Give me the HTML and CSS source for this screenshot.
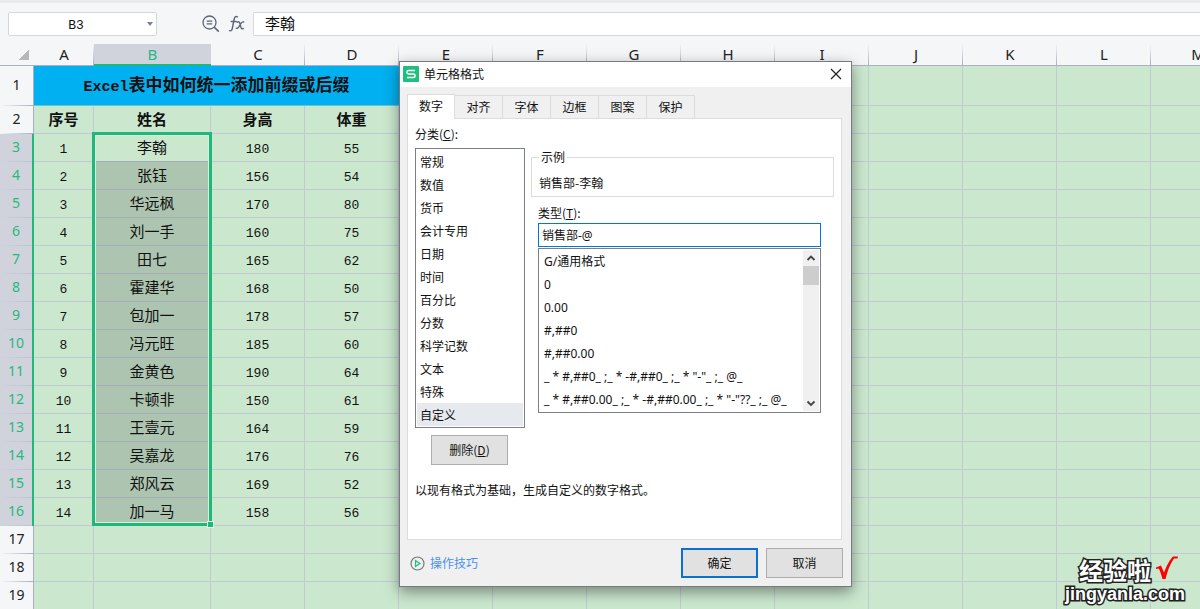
FILE: index.html
```html
<!DOCTYPE html>
<html lang="zh-CN">
<head>
<meta charset="utf-8">
<title>单元格格式</title>
<link rel="stylesheet" href="styles.css">
</head>
<body>
<main class="app">
<header class="formula-bar">
  <div class="name-box">
    <input class="name-input" type="text" value="B3" aria-label="名称框">
    <button class="name-arrow" type="button" aria-label="展开名称"></button>
  </div>
  <div class="formula-tools">
    <button class="tool" type="button" aria-label="浏览公式结果">
      <svg width="18" height="18" viewBox="0 0 18 18" fill="none" stroke="#5c6478" stroke-width="1.3"><circle cx="7.5" cy="7.5" r="6.5"/><path d="M4.7 6.2h5.6M4.7 8.8h5.6"/><path d="M12.2 12.2l4.6 4.4" stroke-width="1.6"/></svg>
    </button>
    <button class="tool" type="button" aria-label="插入函数">
      <svg width="18" height="18" viewBox="0 0 18 18" fill="none" stroke="#5c6478" stroke-width="1.4" stroke-linecap="round"><path d="M9.5 1.8C7.600.9 6.600 2 6.200 4L4.300 13.500C3.900 15.500 3 16.200 1.600 15.700M3.200 6.500h5"/><path d="M9.300 7.300c1.300-1 2.100-.3 2.500 1l1.200 4.300c.4 1.300 1.200 1.700 2.300.8M15.700 7c-1-.5-1.700 0-2.600 1.100l-2.500 4c-.7 1-1.300 1.500-2.300 1.200"/></svg>
    </button>
  </div>
  <input class="formula-input" type="text" value="李翰" aria-label="编辑栏">
</header>

<section class="sheet">
<table class="grid">
<colgroup><col class="c-head"><col class="c-a"><col class="c-b"><col span="11" class="c-std"></colgroup>
<thead>
<tr><th class="corner"></th><th>A</th><th class="on">B</th><th>C</th><th>D</th><th>E</th><th>F</th><th>G</th><th>H</th><th>I</th><th>J</th><th>K</th><th>L</th><th>M</th></tr>
</thead>
<tbody>
<tr class="title-row"><th>1</th><td class="title" colspan="4"><span class="latin">Excel</span>表中如何统一添加前缀或后缀</td><td></td><td></td><td></td><td></td><td></td><td></td><td></td><td></td><td></td></tr>
<tr class="label-row"><th>2</th><td>序号</td><td>姓名</td><td>身高</td><td>体重</td><td></td><td></td><td></td><td></td><td></td><td></td><td></td><td></td><td></td></tr>
<tr class="picked"><th>3</th><td>1</td><td class="active">李翰<span class="selection"><span class="handle"></span></span></td><td>180</td><td>55</td><td></td><td></td><td></td><td></td><td></td><td></td><td></td><td></td><td></td></tr>
<tr class="picked"><th>4</th><td>2</td><td>张钰</td><td>156</td><td>54</td><td></td><td></td><td></td><td></td><td></td><td></td><td></td><td></td><td></td></tr>
<tr class="picked"><th>5</th><td>3</td><td>华远枫</td><td>170</td><td>80</td><td></td><td></td><td></td><td></td><td></td><td></td><td></td><td></td><td></td></tr>
<tr class="picked"><th>6</th><td>4</td><td>刘一手</td><td>160</td><td>75</td><td></td><td></td><td></td><td></td><td></td><td></td><td></td><td></td><td></td></tr>
<tr class="picked"><th>7</th><td>5</td><td>田七</td><td>165</td><td>62</td><td></td><td></td><td></td><td></td><td></td><td></td><td></td><td></td><td></td></tr>
<tr class="picked"><th>8</th><td>6</td><td>霍建华</td><td>168</td><td>50</td><td></td><td></td><td></td><td></td><td></td><td></td><td></td><td></td><td></td></tr>
<tr class="picked"><th>9</th><td>7</td><td>包加一</td><td>178</td><td>57</td><td></td><td></td><td></td><td></td><td></td><td></td><td></td><td></td><td></td></tr>
<tr class="picked"><th>10</th><td>8</td><td>冯元旺</td><td>185</td><td>60</td><td></td><td></td><td></td><td></td><td></td><td></td><td></td><td></td><td></td></tr>
<tr class="picked"><th>11</th><td>9</td><td>金黄色</td><td>190</td><td>64</td><td></td><td></td><td></td><td></td><td></td><td></td><td></td><td></td><td></td></tr>
<tr class="picked"><th>12</th><td>10</td><td>卡顿非</td><td>150</td><td>61</td><td></td><td></td><td></td><td></td><td></td><td></td><td></td><td></td><td></td></tr>
<tr class="picked"><th>13</th><td>11</td><td>王壹元</td><td>164</td><td>59</td><td></td><td></td><td></td><td></td><td></td><td></td><td></td><td></td><td></td></tr>
<tr class="picked"><th>14</th><td>12</td><td>吴嘉龙</td><td>176</td><td>76</td><td></td><td></td><td></td><td></td><td></td><td></td><td></td><td></td><td></td></tr>
<tr class="picked"><th>15</th><td>13</td><td>郑风云</td><td>169</td><td>52</td><td></td><td></td><td></td><td></td><td></td><td></td><td></td><td></td><td></td></tr>
<tr class="picked"><th>16</th><td>14</td><td>加一马</td><td>158</td><td>56</td><td></td><td></td><td></td><td></td><td></td><td></td><td></td><td></td><td></td></tr>
<tr><th>17</th><td></td><td></td><td></td><td></td><td></td><td></td><td></td><td></td><td></td><td></td><td></td><td></td><td></td></tr>
<tr><th>18</th><td></td><td></td><td></td><td></td><td></td><td></td><td></td><td></td><td></td><td></td><td></td><td></td><td></td></tr>
<tr><th>19</th><td></td><td></td><td></td><td></td><td></td><td></td><td></td><td></td><td></td><td></td><td></td><td></td><td></td></tr>
</tbody>
</table>
</section>

<section class="dialog" role="dialog" aria-labelledby="dialog-title">
  <div class="dialog-bar">
    <svg width="16" height="16" viewBox="0 0 16 16"><rect width="16" height="16" rx="1" fill="#1fbf7f"/><path d="M12 4.500H5.500a1.500 1.500 0 0 0-1.500 1.500v.4a1.500 1.500 0 0 0 1.500 1.500h5a1.500 1.500 0 0 1 1.500 1.500v.6a1.500 1.500 0 0 1-1.500 1.500H4" fill="none" stroke="#fff" stroke-width="1.500"/></svg>
    <h1 class="dialog-title" id="dialog-title">单元格格式</h1>
    <button class="close" type="button" aria-label="关闭"><svg width="12" height="12" viewBox="0 0 12 12" stroke="#222" stroke-width="1.200"><path d="M1 1l10 10M11 1L1 11"/></svg></button>
  </div>
  <div class="dialog-body">
    <div class="tabs" role="tablist">
      <button class="tab current" type="button" role="tab" aria-selected="true">数字</button>
      <button class="tab" type="button" role="tab">对齐</button>
      <button class="tab" type="button" role="tab">字体</button>
      <button class="tab" type="button" role="tab">边框</button>
      <button class="tab" type="button" role="tab">图案</button>
      <button class="tab" type="button" role="tab">保护</button>
    </div>
    <div class="pane">
      <div class="columns">
        <div class="categories">
          <div class="caption" id="cat-label">分类(<u>C</u>):</div>
          <ul class="list" role="listbox" aria-labelledby="cat-label">
            <li role="option">常规</li><li role="option">数值</li><li role="option">货币</li><li role="option">会计专用</li><li role="option">日期</li><li role="option">时间</li><li role="option">百分比</li><li role="option">分数</li><li role="option">科学记数</li><li role="option">文本</li><li role="option">特殊</li><li role="option" class="chosen" aria-selected="true">自定义</li>
          </ul>
          <button class="btn delete" type="button">删除(<u>D</u>)</button>
        </div>
        <div class="detail">
          <fieldset class="sample"><legend>示例</legend>销售部-李翰</fieldset>
          <div class="type">
            <label class="caption" for="type-input">类型(<u>T</u>):</label>
            <input class="type-input" id="type-input" type="text" value="销售部-@">
            <div class="formats">
              <ul class="format-list" role="listbox" aria-label="类型">
                <li role="option">G/通用格式</li><li role="option">0</li><li role="option">0.00</li><li role="option">#,##0</li><li role="option">#,##0.00</li><li role="option">_ * #,##0_ ;_ * -#,##0_ ;_ * "-"_ ;_ @_ </li><li role="option">_ * #,##0.00_ ;_ * -#,##0.00_ ;_ * "-"??_ ;_ @_ </li>
              </ul>
              <div class="scrollbar">
                <svg width="16" height="16" viewBox="0 0 16 16" fill="none" stroke="#444" stroke-width="1.800"><path d="M4.500 10L8 6.500l3.500 3.500"/></svg>
                <div class="thumb"></div>
                <svg class="down" width="16" height="16" viewBox="0 0 16 16" fill="none" stroke="#444" stroke-width="1.800"><path d="M4.500 6.500L8 10l3.500-3.500"/></svg>
              </div>
            </div>
          </div>
        </div>
      </div>
      <p class="hint">以现有格式为基础，生成自定义的数字格式。</p>
    </div>
    <footer class="dialog-foot">
      <a class="tips" href="#"><svg width="15" height="15" viewBox="0 0 15 15" fill="none"><circle cx="7.500" cy="7.500" r="6.500" stroke="#777" stroke-width="1.200"/><path d="M5.500 4.700v5.600L10 7.500z" stroke="#1fbf7f" stroke-width="1.200"/></svg>操作技巧</a>
      <button class="btn primary" type="button">确定</button>
      <button class="btn" type="button">取消</button>
    </footer>
  </div>
</section>

<aside class="watermark">
  <div class="mark-top">经验啦<svg width="24" height="24" viewBox="0 0 24 24"><path d="M1 11.500l5-2 3 7C12 8.500 15 3.500 18 .5h5l-.5 2h-3.500C15 8 12.500 15 10.500 23H7.500C6 18 5 14 3.500 12.500L1 13z" fill="#f00"/></svg></div>
  <div class="mark-site">jingyanla.com</div>
</aside>
</main>
</body>
</html>
```
FILE: styles.css
```css
* { box-sizing: border-box; }
body {
  margin: 0;
  background: #cbe8cf;
  color: #111;
  font: 12px/20px "Noto Sans CJK SC", sans-serif;
}
button, input { font: inherit; color: inherit; margin: 0; padding: 0; }
.app { position: relative; height: 100vh; overflow: hidden; display: flex; flex-direction: column; }

/* Formula bar */
.formula-bar {
  flex: none;
  display: flex;
  align-items: flex-start;
  height: 44px;
  padding: 9px 0 0 8px;
  border-top: 3px solid #e9eaec;
  background: #f5f6f8;
}
.name-box, .formula-input { height: 24px; background: #fff; border: 1px solid #d5d7de; border-radius: 2px; }
.name-box { display: flex; width: 149px; }
.name-input { flex: 1; min-width: 0; border: 0; background: none; text-align: center; padding: 2px 8px 0 7px; font: 13px "Liberation Mono", monospace; }
.name-arrow { width: 12px; border: 0; background: none; display: flex; align-items: center; justify-content: center; }
.name-arrow::before { content: ""; border: 3px solid transparent; border-top: 4px solid #7c8192; border-bottom: 0; }
.formula-tools { display: flex; gap: 8px; width: 96px; height: 24px; padding-left: 45px; align-items: center; }
.tool { border: 0; background: none; height: 18px; width: 18px; }
.tool svg { display: block; }
.formula-input { flex: 1; min-width: 0; padding: 0 11px 4px; font-size: 15px; border-right: 0; border-radius: 2px 0 0 2px; }

/* Sheet */
.sheet { flex: 1; overflow: hidden; }
.grid { table-layout: fixed; width: 1244px; border-collapse: separate; border-spacing: 0; }
.c-head { width: 34px; }
.c-a { width: 60px; }
.c-b { width: 117px; }
.c-std { width: 94px; }
.grid th, .grid td { padding: 0; text-align: center; overflow: hidden; white-space: nowrap; }
.grid th { font: 14px/20px "Noto Sans", sans-serif; color: #222; background: #f5f6f8; }
.grid thead th {
  height: 22px;
  padding-bottom: 2px;
  font-size: 15px;
  line-height: 18px;
  border-bottom: 1px solid #a9b0c4;
  background: linear-gradient(#f5f6f8, #a9b0c4) right / 1px 100% no-repeat #f5f6f8;
}
.grid thead .on { padding-bottom: 1px; background: #d0d3dc; color: #26b97f; border-bottom: 2px solid #1eb87a; }
.grid thead .corner { background: linear-gradient(135deg, transparent 50%, #b8b8b8 50%) 18px 5px / 11px 11px no-repeat #f5f6f8; }
.grid tbody tr { height: 28px; }
.grid tbody .title-row { height: 40px; }
.grid tbody th {
  padding-bottom: 3px;
  border-right: 1px solid #a9b0c4;
  background: linear-gradient(90deg, #f5f6f8, #a9b0c4) bottom / 100% 1px no-repeat #f5f6f8;
}
.grid .picked th { background: linear-gradient(90deg, #d0d3dc, #bcc1d0) bottom / 100% 1px no-repeat #d0d3dc; color: #26b97f; border-right: 2px solid #1eb87a; }
.grid td {
  padding-top: 4px;
  border-right: 1px solid #c0cad6;
  border-bottom: 1px solid #c0cad6;
  font: 13px/20px "Liberation Mono", "Noto Sans CJK SC", monospace;
  color: #111;
}
.grid .title { background: #00b0f0; border-bottom-color: #66c6cf; border-right: 0; font-size: 17px; font-weight: bold; }
.title .latin { font-size: 15px; }
.grid .label-row td { font-size: 15px; font-weight: bold; }
.grid .picked td:nth-child(3) { background: #adc5b0; border-bottom-color: #a5aeb8; font-size: 15px; }
.grid .picked td.active { position: relative; overflow: visible; background: #cbe8cf; }
.selection {
  position: absolute;
  top: -2px;
  left: -2px;
  right: -2px;
  height: 394px;
  border: 3px solid #1eb87a;
  box-shadow: inset 0 0 0 1px #d8efdc;
}
.handle { position: absolute; right: -5px; bottom: -5px; width: 7px; height: 7px; background: #1eb87a; border: 1px solid #e6f5e8; }

/* Dialog */
.dialog {
  position: absolute;
  left: 399px;
  top: 61px;
  width: 453px;
  border: 1px solid #777b80;
  background: #f0f0f0;
  box-shadow: 0 5px 14px rgba(0, 0, 0, .42);
}
.dialog-bar { display: flex; align-items: center; gap: 5px; height: 25px; padding: 0 9px 2px 3px; background: #fff; }
.dialog-title { flex: 1; margin: 0; font-size: 12px; font-weight: 400; }
.close { border: 0; background: none; width: 12px; height: 12px; }
.close svg { display: block; }
.dialog-body { padding: 7px 8px 8px 7px; }
.tabs { display: flex; align-items: flex-end; position: relative; }
.tab { width: 48px; height: 23px; border: 1px solid #dcdcdc; border-left: 0; border-bottom: 0; background: #f0f0f0; }
.tab.current { height: 25px; margin-bottom: -1px; border-left: 1px solid #dcdcdc; background: #fff; padding-bottom: 2px; }
.pane { margin-right: 1px; padding: 5px 7px 39px; border: 1px solid #dcdcdc; background: #fff; }
.columns { display: grid; grid-template-columns: 110px 1fr; gap: 6px; }
.caption { display: block; height: 20px; }
ul { margin: 0; padding: 0; list-style: none; }
.list { margin-top: 4px; padding: 1px; border: 1px solid #7a7f8a; }
.list li { line-height: 23px; padding-left: 3px; }
.chosen { background: #e6e9ee; }
.btn { width: 77px; height: 30px; border: 1px solid #adadad; background: #e1e1e1; }
.delete { display: block; margin: 7px 0 0 16px; }
.detail { padding-top: 23px; }
.sample { margin: 0; padding: 6px 7px 3px; border: 1px solid #dcdcdc; min-width: 0; }
.sample legend { padding: 0 2px; }
.type { margin: 6px 13px 0 7px; }
.type-input { display: block; width: 100%; height: 24px; padding: 0 3px; border: 1px solid #0078d7; outline: 0; font-family: "Noto Sans", "Noto Sans CJK SC", sans-serif; }
.formats { display: flex; height: 165px; margin-top: 1px; padding: 1px; border: 1px solid #7a7f8a; }
.format-list { flex: 1; overflow: hidden; font-family: "Noto Sans", "Noto Sans CJK SC", sans-serif; }
.format-list li { height: 23px; line-height: 23px; padding-left: 4px; white-space: pre; }
.scrollbar { display: flex; flex-direction: column; width: 16px; background: #f0f0f0; }
.thumb { height: 19px; background: #cdcdcd; }
.down { margin-top: auto; }
.hint { margin: 15px 0 0; }
.dialog-foot { display: flex; align-items: center; gap: 8px; padding-top: 8px; }
.tips { flex: 1; display: flex; align-items: center; gap: 5px; padding-left: 3px; color: #4a90f0; text-decoration: none; }
.primary { border: 2px solid #0a6fd6; }

/* Watermark */
.watermark {
  position: absolute;
  right: 15px;
  bottom: 5px;
  text-align: right;
  color: #fff;
  font-weight: 700;
  -webkit-text-stroke: 3px #222;
  paint-order: stroke fill;
}
.mark-top { display: flex; justify-content: flex-end; gap: 4px; padding-right: 6px; font-size: 24px; line-height: 28px; }
.mark-site { font: 700 18px/20px "Liberation Sans", sans-serif; }
```
